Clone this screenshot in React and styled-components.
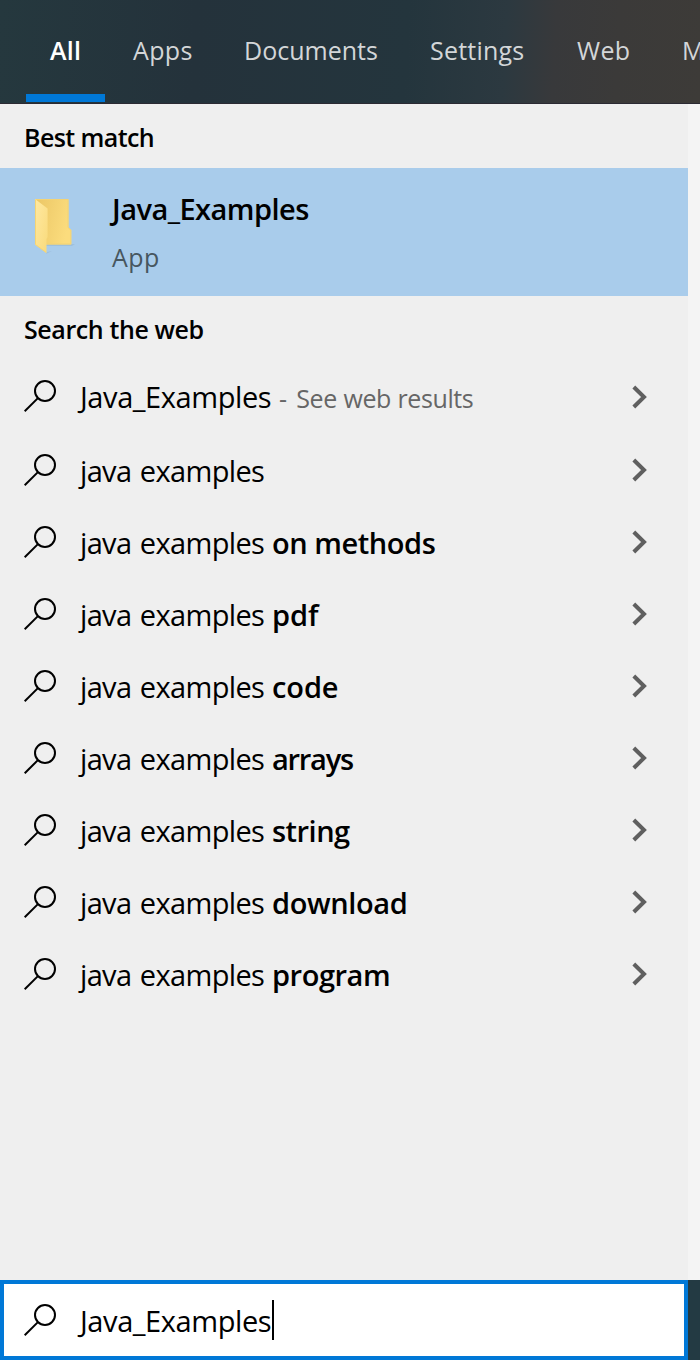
import React from "react";
import styled, { createGlobalStyle } from "styled-components";

const GlobalStyle = createGlobalStyle`
  * { box-sizing: border-box; }
  html, body { margin: 0; padding: 0; }
  body {
    background: #f4f4f4;
    font-family: "Open Sans", "Noto Sans", sans-serif;
    color: #000;
    overflow: hidden;
  }
`;

const Screen = styled.div`
  display: flex;
  flex-direction: column;
  width: 700px;
  height: 1360px;
  overflow: hidden;
`;

const TabBar = styled.nav`
  display: flex;
  flex: none;
  height: 104px;
  padding-left: 26px;
  background: linear-gradient(93deg, #25383e 0%, #24323b 28%, #24353d 58%, #2c3940 72%, #38393b 79%, #3b3a39 88%, #3d3b38 100%);
  border-bottom: 1px solid #2b2a33;
`;

const Tab = styled.div`
  display: flex;
  flex: none;
  align-items: center;
  width: ${(p) => p.$width}px;
  padding: 7px 0 2px ${(p) => p.$inset || 0}px;
  margin: 0 ${(p) => p.$gap || 0}px 1px 0;
  border-bottom: 8px solid ${(p) => (p.$active ? "#0078d7" : "transparent")};
  color: ${(p) => (p.$active ? "#fff" : "#d3d6d8")};
  font-size: 25px;
  line-height: 34px;
  font-weight: ${(p) => (p.$active ? 600 : 400)};
  letter-spacing: ${(p) => p.$track || 0}px;
  white-space: nowrap;
`;

const Panel = styled.main`
  flex: 1;
  width: 688px;
  background: #efefef;
`;

const SectionTitle = styled.h2`
  display: flex;
  align-items: center;
  height: 64px;
  margin: 0;
  padding: 1px 0 0 24px;
  font-size: 25px;
  font-weight: 600;
  letter-spacing: ${(p) => p.$track || 0}px;
`;

const BestMatch = styled.section`
  display: flex;
  height: 128px;
  background: #a9cceb;
`;

const FolderSlot = styled.div`
  width: 112px;
  padding: 30px 0 0 34px;
`;

const BestMatchText = styled.div`
  display: flex;
  flex-direction: column;
  padding-top: 20px;
`;

const AppName = styled.div`
  font-size: 29px;
  line-height: 42px;
  font-weight: 600;
  letter-spacing: ${(p) => p.$track}px;
`;

const AppKind = styled.div`
  margin-top: 6px;
  font-size: 25px;
  line-height: 42px;
  color: #47565f;
  letter-spacing: ${(p) => p.$track}px;
`;

const Row = styled.div`
  display: flex;
  align-items: center;
  height: ${(p) => (p.$first ? 74 : 72)}px;
  padding: 0 40px ${(p) => (p.$first ? 2 : 0)}px 24px;
  font-size: 29px;
  line-height: 40px;
`;

const RowText = styled.div`
  display: flex;
  flex: 1;
  align-items: baseline;
  margin-left: 24px;
  padding-top: 2px;
  white-space: pre;
`;

const Query = styled.span`
  width: ${(p) => p.$width}px;
  letter-spacing: ${(p) => p.$track || 0}px;
  word-spacing: 1.6px;
`;

const Suffix = styled.span`
  font-weight: 600;
  letter-spacing: ${(p) => p.$track || 0}px;
`;

const Hint = styled.span`
  font-size: 25px;
  color: #666;
  letter-spacing: -0.4px;
  word-spacing: 0.5px;
`;

const Dash = styled.span`
  margin-right: 3px;
`;

const ChevronSlot = styled.div`
  display: flex;
  padding-top: ${(p) => (p.$first ? 2 : 0)}px;
`;

const Footer = styled.footer`
  flex: none;
  height: 80px;
  background: #233a43;
`;

const SearchBox = styled.div`
  display: flex;
  align-items: center;
  width: 688px;
  height: 80px;
  padding-left: 20px;
  border: 4px solid #0078d7;
  background: #fff;
  font-size: 29px;
  line-height: 40px;
`;

const SearchText = styled.div`
  width: 192px;
  margin-left: 24px;
  padding-top: 2px;
  letter-spacing: ${(p) => p.$track}px;
  white-space: nowrap;
`;

const Caret = styled.div`
  width: 2px;
  height: 40px;
  background: #000;
`;

const SearchIcon = () => (
  <svg width="32" height="32" viewBox="0 0 32 32" fill="none" stroke="#000" strokeWidth="2">
    <circle cx="21" cy="11" r="10" />
    <path d="M13.9 18.1 L0.7 31.3" />
  </svg>
);

const Chevron = () => (
  <svg width="16" height="24" viewBox="0 0 16 24" fill="none" stroke="#5f5f5f" strokeWidth="4">
    <path d="M1.8 2 L12 12 L1.8 22" />
  </svg>
);

const FolderIcon = () => (
  <svg width="44" height="58" viewBox="0 0 44 58">
    <defs>
      <linearGradient id="back" x1="0" y1="0" x2="1" y2="0.3">
        <stop offset="0" stopColor="#ebc665" />
        <stop offset="1" stopColor="#fbdc7d" />
      </linearGradient>
      <linearGradient id="flap" x1="0" y1="0" x2="1" y2="1">
        <stop offset="0" stopColor="#ffe9a2" />
        <stop offset="1" stopColor="#f9da7b" />
      </linearGradient>
    </defs>
    <path d="M13 46 H41 L38 48 H12 Z M13 54 L18 53 L12 56 Z" fill="#8fb0c5" opacity=".4" />
    <path d="M1 1 H34.5 V29.5 L37.3 32 V46.5 H12 Z" fill="url(#back)" />
    <path d="M1 1.5 H34 V29.5 L36.8 32 V46 H12" fill="none" stroke="#f3d375" strokeWidth="1" />
    <path d="M1 1 L13.6 10.5 V39 L12.5 41 V55 L1 46.5 Z" fill="url(#flap)" />
    <path d="M1.5 1.5 V46.5 L12.2 54.5" fill="none" stroke="#f6d573" strokeWidth="1" />
  </svg>
);

const tabs = [
  { label: "All", width: 79, inset: 24, gap: 28, track: 0.3, active: true },
  { label: "Apps", width: 111, track: 0.35 },
  { label: "Documents", width: 186, track: 0 },
  { label: "Settings", width: 147, track: 0.22 },
  { label: "Web", width: 105, track: 0.3 },
  { label: "More", width: 80 },
];

const suggestions = [
  { suffix: "" },
  { suffix: "on methods", track: -0.45 },
  { suffix: "pdf", track: 0 },
  { suffix: "code", track: -0.1 },
  { suffix: "arrays", track: -1.25 },
  { suffix: "string", track: -0.5 },
  { suffix: "download", track: -0.4 },
  { suffix: "program", track: -0.45 },
];

export default function App() {
  return (
    <>
      <GlobalStyle />
      <Screen>
        <TabBar>
          {tabs.map((t) => (
            <Tab key={t.label} $width={t.width} $inset={t.inset} $gap={t.gap} $track={t.track} $active={t.active}>
              {t.label}
            </Tab>
          ))}
        </TabBar>
        <Panel>
          <SectionTitle $track={-0.58}>Best match</SectionTitle>
          <BestMatch>
            <FolderSlot>
              <FolderIcon />
            </FolderSlot>
            <BestMatchText>
              <AppName $track={-0.54}>Java_Examples</AppName>
              <AppKind $track={0.4}>App</AppKind>
            </BestMatchText>
          </BestMatch>
          <SectionTitle $track={-0.4}>Search the web</SectionTitle>
          <Row $first>
            <SearchIcon />
            <RowText>
              <Query $width={199} $track={-0.42}>Java_Examples</Query>
              <Hint>
                <Dash>-</Dash> See web results
              </Hint>
            </RowText>
            <ChevronSlot $first>
              <Chevron />
            </ChevronSlot>
          </Row>
          {suggestions.map((s) => (
            <Row key={s.suffix}>
              <SearchIcon />
              <RowText>
                <Query $width={192} $track={-0.66}>java examples</Query>
                <Suffix $track={s.track}>{s.suffix}</Suffix>
              </RowText>
              <ChevronSlot>
                <Chevron />
              </ChevronSlot>
            </Row>
          ))}
        </Panel>
        <Footer>
          <SearchBox>
            <SearchIcon />
            <SearchText $track={-0.42}>Java_Examples</SearchText>
            <Caret />
          </SearchBox>
        </Footer>
      </Screen>
    </>
  );
}
